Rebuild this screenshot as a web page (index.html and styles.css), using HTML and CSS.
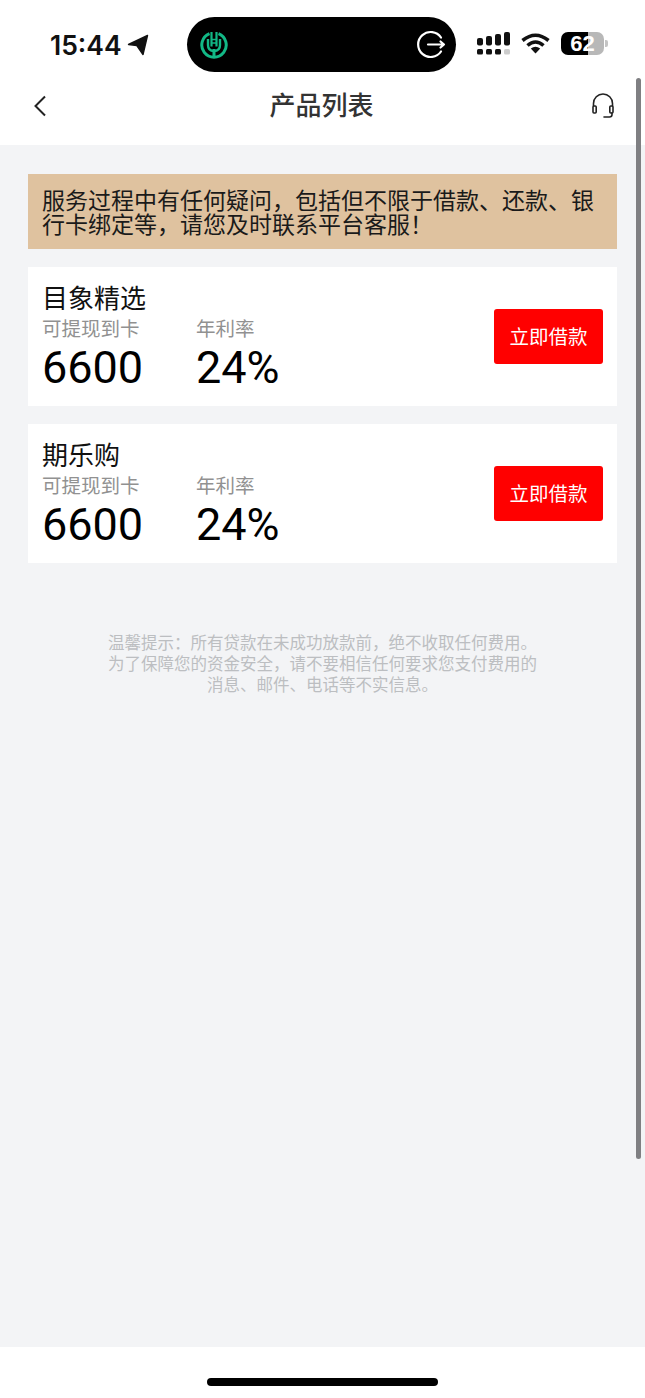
FILE: index.html
```html
<!DOCTYPE html>
<html lang="zh">
<head>
    <meta charset="UTF-8">
    <meta name="viewport" content="width=device-width, initial-scale=1.0">
    <title>产品列表</title>
    <link rel="stylesheet" href="styles.css">
</head>
<body>
    <div class="page">
        <!-- 状态栏 -->
        <div class="status-bar">
            <div class="status-left">
                <span class="time">15:44</span>
                <svg class="location" width="22" height="22" viewBox="0 0 22 22"><path d="M20.5 1.5 1.5 10.5 9.8 11.6 16 20.5Z" fill="#111" stroke="#111" stroke-width="1.4" stroke-linejoin="round"/></svg>
            </div>
            <div class="island">
                <svg width="28" height="28" viewBox="0 0 28 28" fill="none" stroke="#12b886">
                    <path d="M9.5 2.6A12.2 12.2 0 1 0 18.5 2.6" stroke-width="3"/>
                    <path d="M8 8V14Q8 20 14 20Q20 20 20 14V8" stroke-width="2.4"/>
                    <path d="M14 18V26" stroke-width="3"/>
                    <path d="M11.5 1V15.5M16.5 1V15.5" stroke-width="2.2"/>
                    <path d="M11 8.5H17M11 12H17" stroke-width="1.6"/>
                </svg>
                <svg width="30" height="29" viewBox="0 0 30 29" fill="none" stroke="#fff" stroke-width="2.2" stroke-linecap="round" stroke-linejoin="round">
                    <path d="M25 7.5A12.5 12.5 0 1 0 25 21.5"/>
                    <path d="M12 14.5H28M24.5 11.5 28 14.5 24.5 17.5"/>
                </svg>
            </div>
            <div class="status-right">
                <svg class="signal" width="33" height="23" viewBox="0 0 33 23" fill="#111">
                    <rect x="0" y="6" width="6" height="7.5" rx="2"/>
                    <rect x="9" y="4" width="6" height="9.5" rx="2"/>
                    <rect x="18" y="2" width="6" height="11.5" rx="2"/>
                    <rect x="27" y="0" width="6" height="13.5" rx="2"/>
                    <rect x="0" y="17" width="6" height="5.5" rx="1.5"/>
                    <rect x="9" y="17" width="6" height="5.5" rx="1.5"/>
                    <rect x="18" y="17" width="6" height="5.5" rx="1.5"/>
                    <rect x="27" y="17" width="6" height="5.5" rx="1.5" fill="#ccc"/>
                </svg>
                <svg class="wifi" width="29" height="21" viewBox="0 0 29 21" fill="none" stroke="#111" stroke-width="3.6">
                    <path d="M1.5 7.5Q14.5 -3 27.5 7.5"/>
                    <path d="M6.5 12.5Q14.5 5.5 22.5 12.5"/>
                    <path d="M14.5 20.5 9.8 15.6Q14.5 12 19.2 15.6Z" fill="#111" stroke="none"/>
                </svg>
                <div class="battery">
                    <span class="battery-num">62</span>
                </div>
                <span class="battery-nub"></span>
            </div>
        </div>

        <!-- 导航 -->
        <div class="nav">
            <svg width="14" height="22" viewBox="0 0 14 22" fill="none" stroke="#222" stroke-width="2"><path d="M12 1.5 2.5 11 12 20.5"/></svg>
            <h1 class="nav-title">产品列表</h1>
            <svg class="nav-service" width="22" height="25" viewBox="0 0 22 25" fill="none" stroke="#222" stroke-width="1.6" stroke-linecap="round">
                <path d="M1.5 13V10.5A9.5 9.5 0 0 1 20.5 10.5V13"/>
                <rect x="1" y="13" width="3.2" height="7" rx="1"/>
                <rect x="17.8" y="13" width="3.2" height="7" rx="1"/>
                <path d="M20 20V21.5Q20 24 17.5 24H12"/>
            </svg>
        </div>

        <div class="content">
            <div class="notice">服务过程中有任何疑问，包括但不限于借款、还款、银行卡绑定等，请您及时联系平台客服！</div>

            <div class="card">
                <div class="card-info">
                    <div class="card-title">目象精选</div>
                    <div class="stats">
                        <div class="stat-label">可提现到卡</div>
                        <div class="stat-label">年利率</div>
                        <div class="stat-value">6600</div>
                        <div class="stat-value">24%</div>
                    </div>
                </div>
                <div class="loan-btn">立即借款</div>
            </div>

            <div class="card">
                <div class="card-info">
                    <div class="card-title">期乐购</div>
                    <div class="stats">
                        <div class="stat-label">可提现到卡</div>
                        <div class="stat-label">年利率</div>
                        <div class="stat-value">6600</div>
                        <div class="stat-value">24%</div>
                    </div>
                </div>
                <div class="loan-btn">立即借款</div>
            </div>

            <p class="tips">温馨提示：所有贷款在未成功放款前，绝不收取任何费用。<br>为了保障您的资金安全，请不要相信任何要求您支付费用的<br>消息、邮件、电话等不实信息。</p>
        </div>

        <div class="home-area">
            <div class="home-bar"></div>
        </div>

        <!-- 滚动条 -->
        <div class="scrollbar"></div>
    </div>
</body>
</html>
```

FILE: styles.css
```css
* {
    box-sizing: border-box;
}

body {
    margin: 0;
    background-color: #fff;
    font-family: "Liberation Sans", "Noto Sans CJK SC", sans-serif;
}

.page {
    position: relative;
    display: flex;
    flex-direction: column;
    height: 1398px;
    overflow: hidden;
}

/* 状态栏 */
.status-bar {
    display: grid;
    grid-template-columns: 187px 269px 1fr;
    height: 72px;
    padding-top: 17px;
}

.status-left {
    display: flex;
    align-items: center;
    height: 55px;
    padding-left: 50px;
}

.time {
    font-family: Inter, sans-serif;
    font-size: 26.5px;
    font-weight: 600;
    color: #111;
}

.location {
    margin-left: 5px;
}

.island {
    display: flex;
    align-items: center;
    justify-content: space-between;
    height: 55px;
    padding: 0 10px 0 13px;
    background-color: #000;
    border-radius: 28px;
}

.status-right {
    display: flex;
    align-items: center;
    height: 55px;
    padding: 0 0 3px 21px;
}

.wifi {
    margin-left: 11px;
}

.battery {
    width: 43px;
    height: 23px;
    margin-left: 11px;
    border-radius: 7px;
    background: linear-gradient(to right, #000 27px, #b8b8b8 27px);
    text-align: center;
}

.battery-num {
    font-size: 22px;
    font-weight: 700;
    line-height: 23px;
    color: #fff;
}

.battery-nub {
    width: 3px;
    height: 7px;
    margin-left: 1px;
    border-radius: 0 2px 2px 0;
    background-color: #c4c4c4;
}

/* 导航 */
.nav {
    display: grid;
    grid-template-columns: 1fr auto 1fr;
    align-items: center;
    height: 73px;
    padding: 0 35px 6px 33px;
}

.nav-title {
    margin: 0;
    font-size: 26px;
    font-weight: 500;
    line-height: 36px;
    color: #333;
}

.nav-service {
    justify-self: end;
    margin-right: -4px;
}

/* 内容 */
.content {
    flex: 1;
    padding: 29px 28px 0 28px;
    background-color: #f3f4f6;
}

.notice {
    padding: 15px 14px 12px;
    font-size: 23px;
    line-height: 24px;
    color: #1a1a1a;
    background-color: #dfc29f;
}

.card {
    display: flex;
    align-items: center;
    justify-content: space-between;
    height: 139px;
    margin-top: 18px;
    padding: 0 14px;
    background-color: #fff;
}

.card-info {
    padding-top: 4px;
}

.card-title {
    font-size: 26px;
    line-height: 30px;
    color: #111;
}

.stats {
    display: grid;
    grid-template-columns: 154px auto;
}

.stat-label {
    margin: 2px 0 1px;
    font-size: 19.5px;
    line-height: 26px;
    color: #919191;
}

.stat-value {
    font-family: Roboto, sans-serif;
    font-size: 45px;
    line-height: 50px;
    color: #000;
}

.loan-btn {
    width: 109px;
    height: 55px;
    font-size: 19.5px;
    line-height: 57px;
    text-align: center;
    color: #fff;
    background-color: #ff0000;
    border-radius: 3px;
}

.tips {
    margin: 70px 0 0;
    font-size: 16.5px;
    line-height: 21px;
    text-align: center;
    color: #bcbec1;
}

/* 底部 */
.home-area {
    display: flex;
    justify-content: center;
    height: 51px;
    padding-top: 31px;
}

.home-bar {
    width: 231px;
    height: 8px;
    background-color: #000;
    border-radius: 4px;
}

.scrollbar {
    position: absolute;
    top: 78px;
    left: 636px;
    width: 5px;
    height: 1081px;
    background-color: #7f7f82;
    border-radius: 3px;
}
```
